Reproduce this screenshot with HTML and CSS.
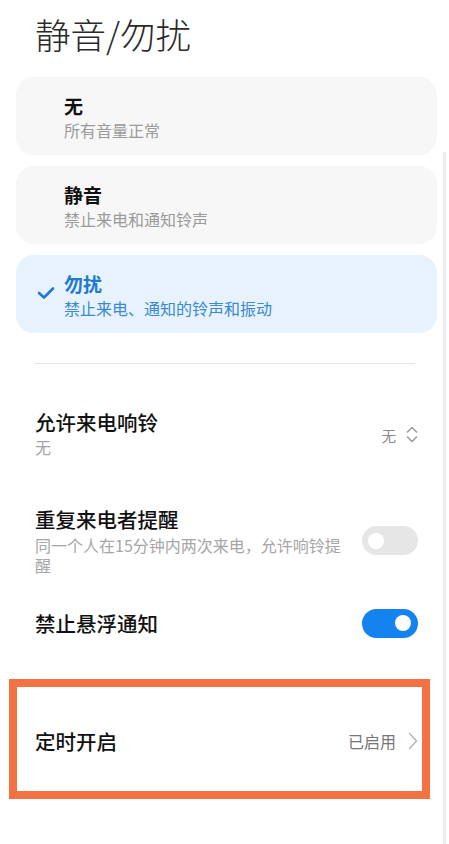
FILE: index.html
```html
<!DOCTYPE html>
<html lang="zh-CN">
<head>
<meta charset="utf-8">
<meta name="viewport" content="width=device-width, initial-scale=1">
<title>静音/勿扰</title>
<link rel="stylesheet" href="styles.css">
</head>
<body>
<div class="page">
  <h1 class="page-title">静音/勿扰</h1>

  <div class="mode-list">
    <div class="mode-card">
      <span class="mode-check"></span>
      <div class="mode-text">
        <div class="mode-name">无</div>
        <div class="mode-desc">所有音量正常</div>
      </div>
    </div>
    <div class="mode-card">
      <span class="mode-check"></span>
      <div class="mode-text">
        <div class="mode-name">静音</div>
        <div class="mode-desc">禁止来电和通知铃声</div>
      </div>
    </div>
    <div class="mode-card mode-card-active">
      <span class="mode-check">
        <svg width="18" height="14" viewBox="0 0 18 14"><path d="M2 7 L7 11.5 L16 2.5" fill="none" stroke="#1e78d2" stroke-width="2.6" stroke-linecap="round" stroke-linejoin="round"/></svg>
      </span>
      <div class="mode-text">
        <div class="mode-name">勿扰</div>
        <div class="mode-desc">禁止来电、通知的铃声和振动</div>
      </div>
    </div>
  </div>

  <div class="settings">
    <div class="divider"></div>

    <div class="row row-lg">
      <div class="row-text">
        <div class="row-title">允许来电响铃</div>
        <div class="row-desc">无</div>
      </div>
      <div class="row-value">
        <span class="value-text value-small">无</span>
        <svg class="updown" width="12" height="19" viewBox="0 0 12 19"><path d="M1.5 7 L6 2.5 L10.5 7 M1.5 12 L6 16.5 L10.5 12" fill="none" stroke="#9a9a9a" stroke-width="1.5" stroke-linecap="round" stroke-linejoin="round"/></svg>
      </div>
    </div>

    <div class="row row-multi">
      <div class="row-text">
        <div class="row-title">重复来电者提醒</div>
        <div class="row-desc">同一个人在15分钟内两次来电，允许响铃提醒</div>
      </div>
      <div class="toggle"><span class="knob"></span></div>
    </div>

    <div class="row">
      <div class="row-text">
        <div class="row-title">禁止悬浮通知</div>
      </div>
      <div class="toggle toggle-on"><span class="knob"></span></div>
    </div>
  </div>

  <div class="highlight-box">
    <div class="row row-box">
      <div class="row-text">
        <div class="row-title">定时开启</div>
      </div>
      <div class="row-value">
        <span class="value-text">已启用</span>
        <svg class="chev" width="10" height="18" viewBox="0 0 10 18"><path d="M1.5 1.5 L8.5 9 L1.5 16.5" fill="none" stroke="#b0b0b0" stroke-width="1.3" stroke-linecap="round" stroke-linejoin="round"/></svg>
      </div>
    </div>
  </div>
</div>
<div class="scrollbar"></div>
</body>
</html>
```

FILE: styles.css
```css
* { box-sizing: border-box; }

html, body {
  margin: 0;
  padding: 0;
  background: #ffffff;
}

body {
  font-family: "Noto Sans CJK SC", "Noto Sans", sans-serif;
  color: #111;
  width: 449px;
  height: 844px;
  overflow: hidden;
}

.page {
  padding: 0 12px 0 16px;
}

.page-title {
  margin: 10px 0 0 19px;
  font-size: 35.5px;
  line-height: 48px;
  font-weight: 300;
  color: #2a2a2a;
  letter-spacing: 0;
}

.mode-list {
  margin-top: 19px;
  display: flex;
  flex-direction: column;
  gap: 11px;
}

.mode-card {
  display: flex;
  align-items: center;
  height: 78px;
  padding: 0 0 0 21px;
  background: #f7f7f7;
  border-radius: 18px;
}

.mode-check {
  width: 18px;
  height: 14px;
  margin-right: 9px;
  margin-top: -2px;
  display: flex;
}

.mode-text {
  display: flex;
  flex-direction: column;
  margin-top: 3px;
}

.mode-name {
  font-size: 19px;
  line-height: 24px;
  font-weight: 700;
  color: #111;
}

.mode-desc {
  margin-top: 1px;
  font-size: 16px;
  line-height: 22px;
  color: #9b9b9b;
}

.mode-card-active {
  background: #e7f2fd;
}

.mode-card-active .mode-name {
  color: #2279d1;
}

.mode-card-active .mode-desc {
  color: #3a8ad0;
}

.settings {
  padding: 0 19px 0 19px;
}

.divider {
  margin: 30px 3px 13px 0;
  height: 1px;
  background: #e6e6e6;
}

.row {
  display: flex;
  align-items: center;
  justify-content: space-between;
  min-height: 64px;
  padding: 16px 0;
}

.row-lg {
  min-height: 114px;
}

.row-multi {
  padding: 15px 0 16px;
}

.row-text {
  flex: 1;
  min-width: 0;
  max-width: 315px;
}

.row-title {
  font-size: 20.5px;
  line-height: 26px;
  font-weight: 500;
  color: #111;
}

.row-desc {
  font-size: 16px;
  line-height: 20px;
  color: #a6a6a6;
}

.row-multi .row-desc {
  margin-top: 3px;
}

.row-lg .row-desc {
  line-height: 24px;
}

.row-value {
  display: flex;
  align-items: center;
  gap: 10px;
}

.value-text {
  font-size: 16px;
  color: #777;
}

.value-small {
  font-size: 14.5px;
  color: #8a8a8a;
  margin-top: 2px;
}

.toggle {
  width: 56px;
  height: 29px;
  border-radius: 15px;
  background: #e6e6e6;
  display: flex;
  align-items: center;
  padding: 0 6px;
  flex-shrink: 0;
}

.knob {
  width: 16px;
  height: 16px;
  border-radius: 50%;
  background: #ffffff;
}

.toggle-on {
  background: #1482ef;
  justify-content: flex-end;
  padding: 0 7px;
}

.highlight-box {
  margin: 24px 7px 0 -7px;
  border: 8px solid #f37142;
}

.row-box {
  height: 104px;
  padding: 4px 4px 0 18px;
}

.row-box .row-value {
  gap: 12px;
}

.chev {
  margin-right: 0;
}

.scrollbar {
  position: fixed;
  top: 152px;
  right: 3px;
  width: 3px;
  height: 692px;
  background: #ececec;
}
```
